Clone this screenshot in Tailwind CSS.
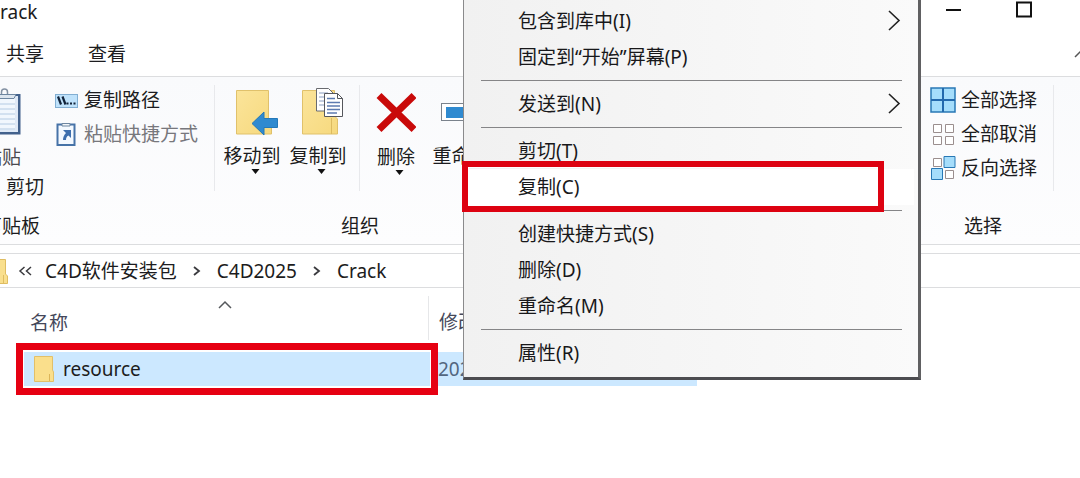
<!DOCTYPE html>
<html lang="zh-CN">
<head>
<meta charset="utf-8">
<meta name="viewport" content="width=device-width, initial-scale=1">
<title>Crack</title>
<script src="https://cdn.jsdelivr.net/npm/@tailwindcss/browser@4"></script>
</head>
<body class="relative min-h-screen overflow-hidden bg-white font-['Noto_Sans','Noto_Sans_CJK_SC',sans-serif] text-[19px] leading-6 text-[#1c1c20]">

<!-- Title bar -->
<header class="flex h-9 items-start justify-between">
  <h1 class="-ml-3">Crack</h1>
  <div class="flex items-start gap-[38px] pr-12">
    <button type="button" aria-label="最小化" class="w-8"><svg class="block" width="32" height="20" viewBox="0 0 32 20"><path d="M0 10h15" stroke="#111" stroke-width="2"/></svg></button>
    <button type="button" aria-label="最大化" class="w-4"><svg class="block" width="16" height="20" viewBox="0 0 16 20"><rect x="1" y="2.500" width="14" height="14" fill="none" stroke="#111" stroke-width="2"/></svg></button>
  </div>
</header>

<!-- Ribbon tabs -->
<nav class="flex h-10 items-start gap-11 pt-1.5 pl-1.5">
  <a href="#share">共享</a>
  <a href="#view">查看</a>
  <button type="button" aria-label="折叠功能区" class="mt-2 ml-auto -mr-2"><svg class="block" width="14" height="8" viewBox="0 0 14 8"><path d="M1 7l6-6 6 6" fill="none" stroke="#555" stroke-width="1.500"/></svg></button>
</nav>

<!-- Ribbon -->
<section class="flex h-[169px] border-y border-[#dcdddf] bg-linear-to-b from-[#f9fafc] to-[#fdfdfe]">
  <div class="flex w-[214px] shrink-0 flex-col">
    <div class="flex flex-1">
      <div class="-ml-[18px] flex w-[72px] shrink-0 flex-col">
        <button type="button" class="flex w-10 flex-col pt-2.5">
          <svg class="block" width="40" height="50" viewBox="0 0 40 50">
            <rect x="1" y="7" width="37.500" height="40.500" fill="#42618c"/>
            <rect x="1" y="9" width="35" height="36" fill="#dfe9f6"/>
            <path d="M1 11h32v32H1z" fill="#f1f7fd"/>
            <path d="M1 17h32M1 22h32M1 27h32M1 32h32M1 37h32M1 42h32" stroke="#b4cbe3"/>
            <path d="M19.500 7V5a3 3 0 0 1 6 0v2" fill="none" stroke="#8492a3" stroke-width="1.500"/>
            <path d="M10 7.500h24l-2 4H12z" fill="#dce5ee" stroke="#6d86a0"/>
          </svg>
          <span class="mt-2 text-[#4a4a50]">粘贴</span>
        </button>
        <button type="button" class="mt-1.5 ml-6 w-[38px] text-left">剪切</button>
      </div>
      <div class="flex flex-col items-start gap-2.5 pt-[11px]">
        <button type="button" class="flex items-center gap-1.5 whitespace-nowrap">
          <svg width="24" height="24" viewBox="0 0 24 24"><rect x="1.500" y="6.500" width="22" height="13" fill="#bfe2fb" stroke="#82aed2"/><path d="M4 8.500l3 8M8.500 8.500l3 8" stroke="#12233a" stroke-width="2.200"/><path d="M12.500 15.500h2M16 15.500h2M19.500 15.500h2" stroke="#12233a" stroke-width="2"/></svg>
          <span>复制路径</span>
        </button>
        <button type="button" class="flex items-center gap-1.5 whitespace-nowrap text-[#77777c]">
          <svg width="24" height="24" viewBox="0 0 24 24"><rect x="3.500" y="2.500" width="17" height="20.500" fill="#f4f9ff" stroke="#4773a8" stroke-width="2"/><path d="M8 4V1.500h8V4z" fill="#f2f5f9" stroke="#6d86a0"/><path d="M9 8h8v8l-2.500-2.500c-2 1-2.500 2.500-2.500 4.500H9c0-3 1-5 3-7z" fill="#3e6fae"/></svg>
          <span>粘贴快捷方式</span>
        </button>
      </div>
    </div>
    <div class="-ml-[17px] pb-1.5">剪贴板</div>
  </div>
  <div class="mt-2 h-[106px] border-l border-[#e8e9ec]"></div>

  <div class="flex w-[290px] shrink-0 flex-col">
    <div class="flex flex-1 items-start">
      <button type="button" class="ml-2 flex w-[58px] flex-col whitespace-nowrap pt-2">
        <svg class="block" width="58" height="59" viewBox="0 0 58 59">
          <defs><linearGradient id="fold" x1="0" y1="0" x2="1" y2="1"><stop offset="0" stop-color="#fbe49a"/><stop offset="1" stop-color="#f6d97e"/></linearGradient></defs>
          <path d="M13.500 5.500h32V36l3 3v10h-35z" fill="url(#fold)" stroke="#e0c16b"/>
          <path d="M29 38.500L41 27v6.500h13.500v9H41V50z" fill="#2f8ad0" stroke="#2478b8"/>
        </svg>
        <span>移动到</span>
        <svg class="block" width="58" height="8" viewBox="0 0 58 8"><path d="M28.500 1h8l-4 5z" fill="#111"/></svg>
      </button>
      <button type="button" class="ml-2 flex w-[58px] flex-col whitespace-nowrap pt-2">
        <svg class="block" width="58" height="59" viewBox="0 0 58 59">
          <path d="M13.500 5.500h32V31l3 3v15h-35z" fill="url(#fold)" stroke="#e0c16b"/>
          <path d="M42.500 33v16" stroke="#ddbb60"/>
          <path d="M27.500 3.500h12l5 5V26h-17z" fill="#fff" stroke="#696b70"/>
          <path d="M30 8h9M30 12h5M30 16h5M30 20h5" stroke="#8a9dc0"/>
          <path d="M35.500 8.500h13l5 5V31.500h-18z" fill="#fff" stroke="#55575c"/>
          <path d="M48.500 8.500v5h5" fill="none" stroke="#55575c"/>
          <path d="M38 13.500h8M38 17.500h13M38 21h13M38 24.500h13M38 28h10" stroke="#5d7bb0" stroke-width="1.500"/>
        </svg>
        <span>复制到</span>
        <svg class="block" width="58" height="8" viewBox="0 0 58 8"><path d="M28.500 1h8l-4 5z" fill="#111"/></svg>
      </button>
      <div class="ml-3 mt-2 h-[106px] border-l border-[#e8e9ec]"></div>
      <button type="button" class="ml-4 flex w-10 flex-col whitespace-nowrap pt-2">
        <svg class="block" width="40" height="60" viewBox="0 0 40 60"><path d="M3 10.500l35 34M38 10.500L3 44.500" stroke="#c90a0a" stroke-width="7"/></svg>
        <span>删除</span>
        <svg class="block" width="40" height="8" viewBox="0 0 40 8"><path d="M19.500 1h8l-4 5z" fill="#111"/></svg>
      </button>
      <button type="button" class="ml-4 flex w-[58px] flex-col whitespace-nowrap pt-2">
        <svg class="block" width="58" height="59" viewBox="0 0 58 59"><rect x="9.500" y="18.500" width="44" height="17" fill="#fff" stroke="#7a828c"/><rect x="14" y="22" width="30" height="11" fill="#2f8ad0"/></svg>
        <span>重命名</span>
      </button>
    </div>
    <div class="pb-1.5 text-center">组织</div>
  </div>

  <div class="ml-auto flex w-[124px] shrink-0 flex-col">
    <div class="flex flex-1 flex-col items-start gap-2.5 pt-[11px]">
      <button type="button" class="flex items-center gap-1 whitespace-nowrap">
        <svg width="28" height="26" viewBox="0 0 28 26" class="-my-px"><path d="M2 1h24v24H2z" fill="#a5ddfb" stroke="#2878b5" stroke-width="1.500"/><path d="M14 1v24M2 13h24" stroke="#2369ad" stroke-width="2"/></svg>
        <span>全部选择</span>
      </button>
      <button type="button" class="flex items-center gap-1 whitespace-nowrap">
        <svg width="28" height="24" viewBox="0 0 28 24"><path d="M4.500 2.500h8v8h-8zM16.500 2.500h8v8h-8zM4.500 14.500h8v8h-8zM16.500 14.500h8v8h-8z" fill="#fff" stroke="#9a8e8e"/></svg>
        <span>全部取消</span>
      </button>
      <button type="button" class="flex items-center gap-1 whitespace-nowrap">
        <svg width="28" height="24" viewBox="0 0 28 24"><path d="M4.500 2.500h8v8h-8zM16.500 14.500h8v8h-8z" fill="#fff" stroke="#9a8e8e"/><path d="M15 0.500h11v11H15zM2.500 12.500h11v11h-11z" fill="#a5ddfb" stroke="#2878b5"/></svg>
        <span>反向选择</span>
      </button>
    </div>
    <div class="pr-4 pb-1.5 text-center">选择</div>
  </div>
  <div class="mt-2 mr-[26px] h-[106px] border-l border-[#e8e9ec]"></div>
</section>

<!-- Address bar -->
<nav aria-label="路径" class="mt-2 flex h-[35px] items-center border-y border-[#dcdddf] whitespace-nowrap">
  <svg class="-ml-3 block" width="20" height="28" viewBox="0 0 20 28"><path d="M1.500 2.500h16V17l2 2v7.500h-18z" fill="#f9df8d" stroke="#dfbd62"/><path d="M15.500 18v8" stroke="#dfbd62"/></svg>
  <svg class="ml-2.5 block" width="16" height="12" viewBox="0 0 16 12"><path d="M6.500 2L2 6l4.500 4M13 2L8.500 6l4.500 4" fill="none" stroke="#3a3a3e" stroke-width="1.500"/></svg>
  <a href="#pkg" class="ml-[11px]">C4D软件安装包</a>
  <svg class="mx-3.5 block" width="12" height="12" viewBox="0 0 12 12"><path d="M3 2l5 4-5 4" fill="none" stroke="#3a3a3e" stroke-width="1.800"/></svg>
  <a href="#c4d">C4D2025</a>
  <svg class="mx-3.5 block" width="12" height="12" viewBox="0 0 12 12"><path d="M3 2l5 4-5 4" fill="none" stroke="#3a3a3e" stroke-width="1.800"/></svg>
  <a href="#crack">Crack</a>
</nav>

<!-- File list -->
<table class="mt-2 ml-[22px] w-[675px] table-fixed border-collapse text-left">
  <thead>
    <tr class="h-14 align-top">
      <th scope="col" class="w-[406px] pl-2 font-normal text-[#45485a]">
        <svg class="mt-1 mb-0.5 ml-[188px] block" width="14" height="9" viewBox="0 0 14 9"><path d="M1 8l6-6 6 6" fill="none" stroke="#55585c" stroke-width="1.500"/></svg>
        <span>名称</span>
      </th>
      <th scope="col" class="font-normal text-[#45485a]"><div class="h-11 border-l border-[#e6e7e9] pt-3.5 pl-2.5">修改日期</div></th>
    </tr>
  </thead>
  <tbody>
    <tr class="h-[34px] bg-[#cce8ff]">
      <td class="pl-3">
        <div class="flex items-center gap-2">
          <svg width="21" height="28" viewBox="0 0 21 28"><path d="M0.500 1.500h18V15l1 2v9.500h-19z" fill="#fadf8c" stroke="#e2c069"/><path d="M15.500 19v7" stroke="#dcb558"/></svg>
          <span>resource</span>
        </div>
      </td>
      <td class="pl-2.5 text-[#536680]">2025</td>
    </tr>
  </tbody>
</table>

<!-- Context menu -->
<div role="menu" class="absolute top-0 left-[463px] flex w-[458px] flex-col border-r-3 border-b-3 border-l border-r-[#606062] border-b-[#4c4c50] border-l-[#8a8a8c] bg-linear-to-r from-[#f1f1f1] to-[#fafafa] pt-[3px] pb-1.5 text-[#18181a]">
  <button type="button" role="menuitem" class="flex h-9 items-center justify-between pr-[17px] pl-[54px]"><span>包含到库中(I)</span><svg width="14" height="22" viewBox="0 0 14 22"><path d="M2 1l10 9.500L2 20" fill="none" stroke="#222" stroke-width="1.600"/></svg></button>
  <button type="button" role="menuitem" class="flex h-9 items-center pl-[54px]">固定到“开始”屏幕(P)</button>
  <hr class="my-[5px] mr-4 ml-[17px] border-[#858587]">
  <button type="button" role="menuitem" class="flex h-9 items-center justify-between pr-[17px] pl-[54px]"><span>发送到(N)</span><svg width="14" height="22" viewBox="0 0 14 22"><path d="M2 1l10 9.500L2 20" fill="none" stroke="#222" stroke-width="1.600"/></svg></button>
  <hr class="my-[5px] mr-4 ml-[17px] border-[#858587]">
  <button type="button" role="menuitem" class="flex h-9 items-center pl-[54px]">剪切(T)</button>
  <button type="button" role="menuitem" class="mr-1 flex h-9 items-center bg-white pl-[54px]">复制(C)</button>
  <hr class="my-[5px] mr-4 ml-[17px] border-[#858587]">
  <button type="button" role="menuitem" class="flex h-9 items-center pl-[54px]">创建快捷方式(S)</button>
  <button type="button" role="menuitem" class="flex h-9 items-center pl-[54px]">删除(D)</button>
  <button type="button" role="menuitem" class="flex h-9 items-center pl-[54px]">重命名(M)</button>
  <hr class="my-[5px] mr-4 ml-[17px] border-[#858587]">
  <button type="button" role="menuitem" class="flex h-9 items-center pl-[54px]">属性(R)</button>
</div>

<!-- Highlight frames -->
<div class="pointer-events-none absolute top-[161px] left-[462px] h-[51px] w-[422px] border-6 border-[#dd0211] bg-white/0 inset-ring inset-ring-white"></div>
<div class="pointer-events-none absolute top-[343px] left-4 h-[52px] w-[422px] border-7 border-[#e60012] inset-ring inset-ring-white"></div>
</body>
</html>
